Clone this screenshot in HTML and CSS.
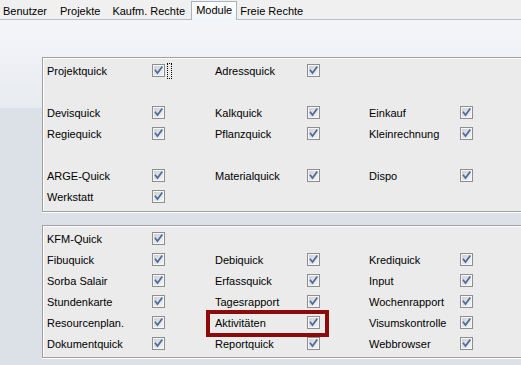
FILE: index.html
```html
<!DOCTYPE html>
<html>
<head>
<meta charset="utf-8">
<link rel="stylesheet" href="styles.css">
</head>
<body>
<div class="tabs">
  <span class="tab t1">Benutzer</span>
  <span class="tab t2">Projekte</span>
  <span class="tab t3">Kaufm. Rechte</span>
  <span class="tab active">Module</span>
  <span class="tab t5">Freie Rechte</span>
</div>
<div class="page">
  <div class="group g1">
    <span class="lbl">Projektquick</span><span class="cb focus"><svg width="13" height="13"><use href="#chk"/></svg><i class="dots"></i></span>
    <span class="lbl">Adressquick</span><span class="cb"><svg width="13" height="13"><use href="#chk"/></svg></span>
    <span class="lbl"></span><span class="cb"></span>

    <span class="lbl"></span><span class="cb"></span><span class="lbl"></span><span class="cb"></span><span class="lbl"></span><span class="cb"></span>

    <span class="lbl">Devisquick</span><span class="cb"><svg width="13" height="13"><use href="#chk"/></svg></span>
    <span class="lbl">Kalkquick</span><span class="cb"><svg width="13" height="13"><use href="#chk"/></svg></span>
    <span class="lbl">Einkauf</span><span class="cb"><svg width="13" height="13"><use href="#chk"/></svg></span>

    <span class="lbl">Regiequick</span><span class="cb"><svg width="13" height="13"><use href="#chk"/></svg></span>
    <span class="lbl">Pflanzquick</span><span class="cb"><svg width="13" height="13"><use href="#chk"/></svg></span>
    <span class="lbl">Kleinrechnung</span><span class="cb"><svg width="13" height="13"><use href="#chk"/></svg></span>

    <span class="lbl"></span><span class="cb"></span><span class="lbl"></span><span class="cb"></span><span class="lbl"></span><span class="cb"></span>

    <span class="lbl">ARGE-Quick</span><span class="cb"><svg width="13" height="13"><use href="#chk"/></svg></span>
    <span class="lbl">Materialquick</span><span class="cb"><svg width="13" height="13"><use href="#chk"/></svg></span>
    <span class="lbl">Dispo</span><span class="cb"><svg width="13" height="13"><use href="#chk"/></svg></span>

    <span class="lbl">Werkstatt</span><span class="cb"><svg width="13" height="13"><use href="#chk"/></svg></span>
    <span class="lbl"></span><span class="cb"></span><span class="lbl"></span><span class="cb"></span>
  </div>

  <div class="group g2">
    <span class="lbl">KFM-Quick</span><span class="cb"><svg width="13" height="13"><use href="#chk"/></svg></span>
    <span class="lbl"></span><span class="cb"></span><span class="lbl"></span><span class="cb"></span>

    <span class="lbl">Fibuquick</span><span class="cb"><svg width="13" height="13"><use href="#chk"/></svg></span>
    <span class="lbl">Debiquick</span><span class="cb"><svg width="13" height="13"><use href="#chk"/></svg></span>
    <span class="lbl">Krediquick</span><span class="cb"><svg width="13" height="13"><use href="#chk"/></svg></span>

    <span class="lbl">Sorba Salair</span><span class="cb"><svg width="13" height="13"><use href="#chk"/></svg></span>
    <span class="lbl">Erfassquick</span><span class="cb"><svg width="13" height="13"><use href="#chk"/></svg></span>
    <span class="lbl">Input</span><span class="cb"><svg width="13" height="13"><use href="#chk"/></svg></span>

    <span class="lbl">Stundenkarte</span><span class="cb"><svg width="13" height="13"><use href="#chk"/></svg></span>
    <span class="lbl">Tagesrapport</span><span class="cb"><svg width="13" height="13"><use href="#chk"/></svg></span>
    <span class="lbl">Wochenrapport</span><span class="cb"><svg width="13" height="13"><use href="#chk"/></svg></span>

    <span class="lbl">Resourcenplan.</span><span class="cb"><svg width="13" height="13"><use href="#chk"/></svg></span>
    <span class="lbl">Aktivitäten</span><span class="cb"><svg width="13" height="13"><use href="#chk"/></svg></span>
    <span class="lbl">Visumskontrolle</span><span class="cb"><svg width="13" height="13"><use href="#chk"/></svg></span>

    <span class="lbl">Dokumentquick</span><span class="cb"><svg width="13" height="13"><use href="#chk"/></svg></span>
    <span class="lbl">Reportquick</span><span class="cb"><svg width="13" height="13"><use href="#chk"/></svg></span>
    <span class="lbl">Webbrowser</span><span class="cb"><svg width="13" height="13"><use href="#chk"/></svg></span>

    <div class="highlight"></div>
  </div>
</div>

<svg width="0" height="0" class="defs">
  <defs>
    <linearGradient id="cbg" x1="0" y1="0" x2="1" y2="1">
      <stop offset="0" stop-color="#cfd0d3"/>
      <stop offset="1" stop-color="#f4f4f4"/>
    </linearGradient>
    <g id="chk">
      <rect x="0.5" y="0.5" width="12" height="12" fill="#f6f6f6" stroke="#8c8e90"/>
      <rect x="2" y="2" width="9" height="9" fill="url(#cbg)"/>
      <path d="M3.5 6.5 L5.5 9 L9.8 3.2" fill="none" stroke="#4a6a9c" stroke-width="1.7" stroke-linecap="square"/>
    </g>
  </defs>
</svg>
</body>
</html>
```

FILE: styles.css
```css
html, body {
  margin: 0;
  padding: 0;
}
body {
  width: 521px;
  height: 365px;
  overflow: hidden;
  font-family: "Liberation Sans", Arial, sans-serif;
  font-size: 11px;
  color: #000;
  background: #dce0e7;
}
.defs {
  position: absolute;
}
.tabs {
  height: 19px;
  background: #f0f0f0;
  border-bottom: 1px solid #b9bdc5;
  display: flex;
  align-items: flex-start;
  position: relative;
}
.tab {
  display: block;
  line-height: 13px;
  padding-top: 5px;
  margin-left: 3px;
}
.tab.t2 { margin-left: 13px; }
.tab.t3 { margin-left: 12px; }
.tab.active {
  margin-left: 6px;
  margin-top: 1px;
  height: 19px;
  box-sizing: border-box;
  padding: 2px 4px 0 4px;
  background: linear-gradient(#ffffff, #f1f4f9);
  border: 1px solid #a7b3c5;
  border-bottom: none;
  position: relative;
  z-index: 1;
}
.tab.t5 { margin-left: 3px; }

.page {
  height: 345px;
  padding: 37px 0 0 42px;
  box-sizing: border-box;
  background: linear-gradient(#f4f5f9 0, #e8ebf0 88px, #dce0e7 88px, #dce0e7 100%);
}
.group {
  position: relative;
  display: grid;
  grid-template-columns: 105px 63px 92px 62px 91px 13px;
  grid-auto-rows: 21px;
  padding: 2px 0 4px 4px;
  margin-right: -20px;
  background: #ebebeb;
  border: 1px solid #a0a0a0;
  box-shadow: inset 1px 1px 0 #fff, 0 1px 0 #fff;
}
.g2 {
  margin-top: 13px;
  padding: 2px 0 3px 4px;
}
.lbl {
  display: flex;
  align-items: center;
  white-space: nowrap;
}
.cb {
  display: flex;
  align-items: center;
  gap: 2px;
}
.cb svg {
  display: block;
}
.dots {
  display: block;
  width: 3px;
  height: 14px;
  border: 1px dotted #000;
}
.highlight {
  position: absolute;
  left: 163px;
  top: 84px;
  width: 123px;
  height: 27px;
  box-sizing: border-box;
  border: 4px solid #8b0a0a;
}
```
